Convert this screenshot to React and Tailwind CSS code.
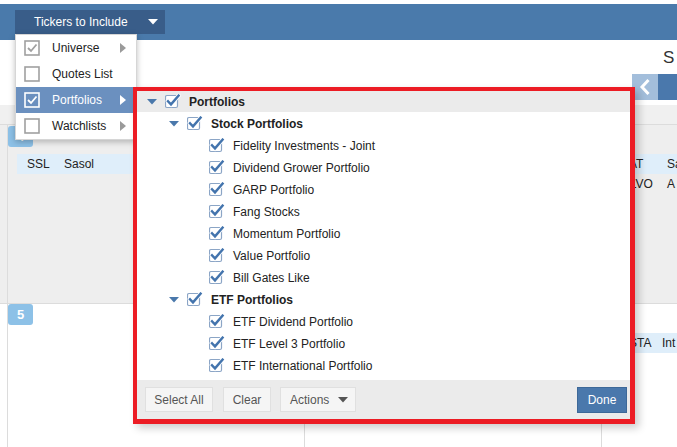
import React from "react";

const FONT = "font-['Liberation_Sans',Arial,sans-serif]";

function TreeCheck() {
  return (
    <svg width="16" height="16" viewBox="0 0 16 16" className="shrink-0">
      <rect x="0.5" y="1.5" width="12" height="12" rx="1.5" fill="#fff" stroke="#8ba5c6" strokeWidth="1.2" />
      <path d="M3 7.2 L6 10.4 L13.6 1.6" fill="none" stroke="#fff" strokeWidth="4" strokeLinecap="square" />
      <path d="M3 7.2 L6 10.4 L13.6 1.6" fill="none" stroke="#4374ad" strokeWidth="2.4" strokeLinecap="square" />
    </svg>
  );
}

function Caret({ color = "#4a78ab" }) {
  return (
    <svg width="10" height="6" viewBox="0 0 10 6" className="shrink-0">
      <path d="M0 0 H10 L5 5.5 Z" fill={color} />
    </svg>
  );
}

function MenuCheck({ checked, light, muted }) {
  const stroke = light ? "#ffffff" : "#a0a0a0";
  return (
    <svg width="16" height="16" viewBox="0 0 16 16" className="shrink-0">
      <rect x="1" y="1" width="14" height="14" fill="none" stroke={stroke} strokeWidth="1.6" />
      {checked && (
        <path d="M4 8 L7 11 L12.5 4.5" fill="none" stroke={light ? "#ffffff" : muted ? "#a0a0a0" : "#4374ad"} strokeWidth="1.8" />
      )}
    </svg>
  );
}

function MenuItem({ label, checked, active, arrow, muted }) {
  return (
    <div className={`flex items-center h-[26px] pl-[8px] ${active ? "bg-[#6b90bf] text-white" : "text-[#222]"}`}>
      <MenuCheck checked={checked} light={active} muted={muted} />
      <span className="ml-[12px] text-[12px]">{label}</span>
      {arrow && (
        <span
          className={`ml-auto mr-[10px] w-0 h-0 border-y-[5px] border-y-transparent border-l-[6px] ${active ? "border-l-white" : "border-l-[#9a9a9a]"}`}
        />
      )}
    </div>
  );
}

const stocks = [
  "Fidelity Investments - Joint",
  "Dividend Grower Portfolio",
  "GARP Portfolio",
  "Fang Stocks",
  "Momentum Portfolio",
  "Value Portfolio",
  "Bill Gates Like",
];

const etfs = ["ETF Dividend Portfolio", "ETF Level 3 Portfolio", "ETF International Portfolio"];

function Group({ label, items }) {
  return (
    <>
      <div className="flex items-center h-[22px] pl-[32px]">
        <Caret />
        <span className="ml-[8px]">
          <TreeCheck />
        </span>
        <span className="ml-[8px] font-bold">{label}</span>
      </div>
      {items.map((it) => (
        <div key={it} className="flex items-center h-[22px] pl-[72px]">
          <TreeCheck />
          <span className="ml-[8px]">{it}</span>
        </div>
      ))}
    </>
  );
}

function Badge({ n }) {
  return (
    <div className="w-[25px] h-[21px] rounded-[3px] bg-[#8dc1e7] text-white font-bold text-[13px] flex items-center justify-center">
      {n}
    </div>
  );
}

export default function App() {
  return (
    <div className={`relative w-[677px] h-[447px] overflow-hidden bg-white ${FONT} text-[12px] text-[#222]`}>
      <div className="h-[4px] bg-white" />
      {/* top bar */}
      <div className="h-[36px] bg-[#4a7aab] pl-[15px] pt-[6px]">
        <div className="flex items-center w-[150px] h-[24px] bg-[#395d89] text-white pl-[19px]">
          <span>Tickers to Include</span>
          <span className="ml-auto mr-[7px]">
            <Caret color="#ffffff" />
          </span>
        </div>
      </div>

      {/* band A */}
      <div className="h-[65px] flex justify-end">
        <div className="w-[45px]">
          <div className="pt-[8px] pl-[31px] text-[17px] leading-[20px] text-[#333] whitespace-nowrap">S</div>
          <div className="mt-[6px] flex h-[26px]">
            <div className="w-[26px] bg-[#a3bedb] flex items-center justify-center">
              <svg width="12" height="18" viewBox="0 0 12 18">
                <path d="M9.5 2 L3 9 L9.5 16" fill="none" stroke="#fff" strokeWidth="3" />
              </svg>
            </div>
            <div className="flex-1 bg-[#4a78ac]" />
          </div>
        </div>
      </div>

      {/* band B */}
      <div className="h-[20px] bg-[#f0f0f0] border-b border-[#dcdcdc]" />

      {/* band C */}
      <div className="h-[178px] bg-[#eeeeee] flex">
        <div className="w-[7px]" />
        <div className="w-[297px] border-l border-[#dcdcdc] pt-[1px]">
          <Badge n="4" />
          <div className="mt-[7px] ml-[9px] h-[20px] bg-[#dfeefa] flex items-center pl-[10px]">
            <span className="w-[37px]">SSL</span>
            <span>Sasol</span>
          </div>
        </div>
        <div className="w-[297px] border-l border-[#dcdcdc]" />
        <div className="flex-1 border-l border-[#dcdcdc] pt-[29px] whitespace-nowrap overflow-hidden">
          <div className="ml-[9px] h-[20px] bg-[#dfeefa] flex items-center pl-[10px]">
            <span className="w-[46px] shrink-0">SAT</span>
            <span>Sa</span>
          </div>
          <div className="ml-[9px] h-[20px] flex items-center pl-[10px]">
            <span className="w-[46px] shrink-0">HLVO</span>
            <span>A</span>
          </div>
        </div>
      </div>

      {/* band D */}
      <div className="h-[145px] bg-white flex border-t border-[#dcdcdc]">
        <div className="w-[7px]" />
        <div className="w-[297px] border-l border-[#dcdcdc]">
          <Badge n="5" />
        </div>
        <div className="w-[297px] border-l border-[#dcdcdc]" />
        <div className="flex-1 border-l border-[#dcdcdc] pt-[29px] whitespace-nowrap overflow-hidden">
          <div className="ml-[9px] h-[20px] bg-[#dfeefa] flex items-center pl-[10px]">
            <span className="w-[41px] shrink-0">ESTA</span>
            <span>Int</span>
          </div>
        </div>
      </div>

      {/* dropdown menu */}
      <div className="absolute left-[15px] top-[34px] w-[122px] z-10 bg-white border border-[#d6d6d6] shadow-[0_2px_6px_rgba(0,0,0,0.25)]">
        <MenuItem label="Universe" checked muted arrow />
        <MenuItem label="Quotes List" />
        <MenuItem label="Portfolios" checked active arrow />
        <MenuItem label="Watchlists" arrow />
      </div>

      {/* portfolios popup */}
      <div className="absolute left-[133px] top-[87px] w-[502px] h-[337px] z-20 border-l-4 border-t-4 border-r-[5px] border-b-[5px] border-[#ec1c24] bg-white flex flex-col shadow-[4px_4px_8px_rgba(0,0,0,0.2)]">
        <div className="flex items-center h-[21px] bg-[#ebebeb] pl-[10px]">
          <Caret />
          <span className="ml-[8px]">
            <TreeCheck />
          </span>
          <span className="ml-[8px] font-bold">Portfolios</span>
        </div>
        <div className="h-[1px]" />
        <Group label="Stock Portfolios" items={stocks} />
        <Group label="ETF Portfolios" items={etfs} />
        <div className="mt-auto h-[39px] bg-[#ebebeb] flex items-center pl-[8px] pr-[3px] text-[#555]">
          <div className="w-[68px] h-[25px] bg-[#f5f5f5] border border-[#e0e0e0] flex items-center justify-center">Select All</div>
          <div className="ml-[10px] w-[48px] h-[25px] bg-[#f5f5f5] border border-[#e0e0e0] flex items-center justify-center">Clear</div>
          <div className="ml-[9px] w-[76px] h-[25px] bg-[#f5f5f5] border border-[#e0e0e0] flex items-center pl-[9px]">
            <span>Actions</span>
            <span className="ml-[9px]">
              <Caret color="#555555" />
            </span>
          </div>
          <div className="ml-auto w-[50px] h-[26px] bg-[#4a78ac] border border-[#3d6898] text-white flex items-center justify-center">Done</div>
        </div>
      </div>
    </div>
  );
}
